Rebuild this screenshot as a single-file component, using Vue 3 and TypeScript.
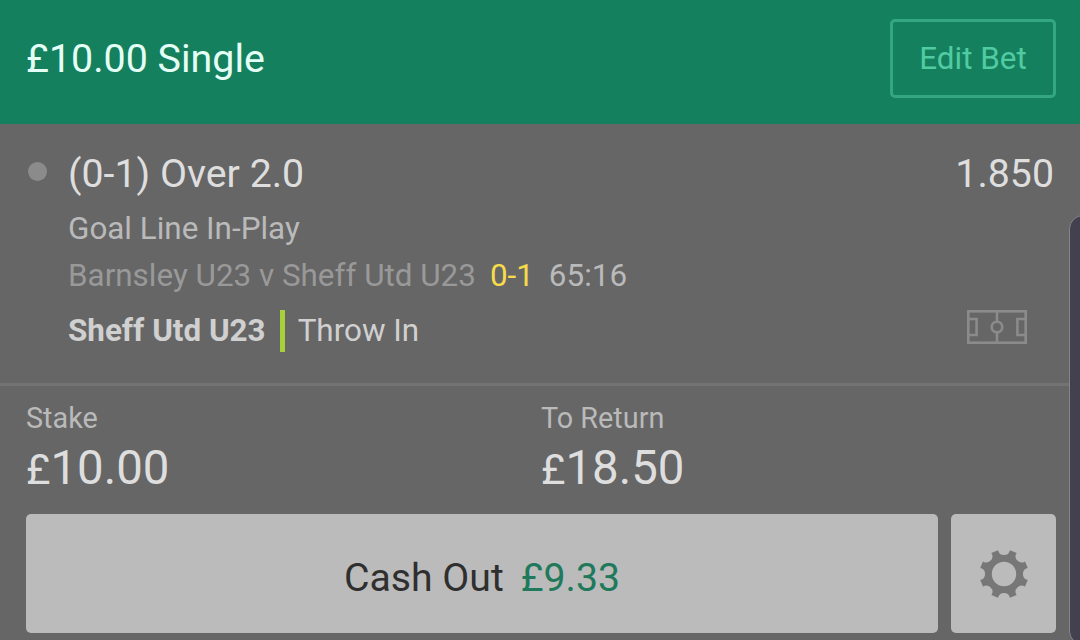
<script setup lang="ts">
const bet = {
  title: '£10.00 Single',
  selection: '(0-1) Over 2.0',
  odds: '1.850',
  market: 'Goal Line In-Play',
  fixture: 'Barnsley U23 v Sheff Utd U23',
  score: '0-1',
  clock: '65:16',
  team: 'Sheff Utd U23',
  event: 'Throw In',
  cashOut: '£9.33',
}

const totals = [
  { label: 'Stake', amount: '10.00' },
  { label: 'To Return', amount: '18.50' },
]

// Eight-toothed gear outline with rounded notches between the teeth
function gearPath(): string {
  const point = (deg: number): string => {
    const a = (deg * Math.PI) / 180
    return `${(24.5 * Math.cos(a)).toFixed(2)} ${(24.5 * Math.sin(a)).toFixed(2)}`
  }
  let d = `M${point(-14)}`
  for (let k = 0; k < 8; k++) {
    d += `A6.05 6.05 0 0 0 ${point(k * 45 + 14)}L${point(k * 45 + 31)}`
  }
  return d + 'ZM12.2 0A12.2 12.2 0 1 0 -12.2 0A12.2 12.2 0 1 0 12.2 0Z'
}
const gear = gearPath()
</script>

<template>
  <main class="slip">
    <header class="header">
      <h1 class="title">{{ bet.title }}</h1>
      <button class="edit">Edit Bet</button>
    </header>

    <section class="selection">
      <span class="dot"></span>
      <div class="details">
        <div class="pick"><span>{{ bet.selection }}</span><span class="odds">{{ bet.odds }}</span></div>
        <div class="line market">{{ bet.market }}</div>
        <div class="line fixture">
          <span class="teams">{{ bet.fixture }}</span>
          <span class="score">{{ bet.score }}</span>
          <span class="clock">{{ bet.clock }}</span>
        </div>
        <div class="live">
          <span class="team">{{ bet.team }}</span>
          <span class="bar"></span>
          <span class="event">{{ bet.event }}</span>
          <svg class="pitch" width="60" height="34" viewBox="0 0 60 34" fill="none" stroke="#8b8b8b" stroke-width="2.6">
            <rect x="1.3" y="1.3" width="57.4" height="31.4" />
            <path d="M30 1V12M30 23V33M2 9H9.6V25H2M58 9H50.4V25H58" />
            <circle cx="30" cy="17" r="5.3" />
          </svg>
        </div>
      </div>
    </section>

    <section class="totals">
      <div v-for="t in totals" :key="t.label" class="total">
        <div class="label">{{ t.label }}</div>
        <div class="amount"><span class="currency">£</span>{{ t.amount }}</div>
      </div>
    </section>

    <footer class="actions">
      <button class="cash"><span>Cash Out</span><span class="value">{{ bet.cashOut }}</span></button>
      <button class="settings" aria-label="Settings">
        <svg width="50" height="50" viewBox="-25 -25 50 50"><path :d="gear" fill="#777" fill-rule="evenodd" /></svg>
      </button>
    </footer>

    <aside class="edge"></aside>
  </main>
</template>

<style>
body { margin: 0; }
</style>

<style scoped>
.slip {
  position: relative;
  width: 1080px;
  height: 640px;
  overflow: hidden;
  background: #666;
  font-family: Roboto, "Liberation Sans", sans-serif;
  white-space: nowrap;
}
.slip *, .slip { box-sizing: border-box; }
button { font: inherit; margin: 0; padding: 0; border: 0; }
.header {
  height: 124px;
  padding: 0 24px 7px 26px;
  display: flex;
  align-items: center;
  justify-content: space-between;
  background: #15805d;
}
.title { margin: 0; font-size: 39.4px; font-weight: 400; color: #e4fff5; }
.edit {
  width: 166px;
  height: 79px;
  border: 3px solid #34a681;
  border-radius: 5px;
  background: transparent;
  color: #50cba2;
  font-size: 31.4px;
}
.selection {
  height: 262px;
  padding: 25px 26px 0 28px;
  display: flex;
  border-bottom: 3px solid #737373;
}
.dot { width: 19px; height: 19px; margin: 13px 21px 0 0; border-radius: 50%; background: #8b8b8b; }
.details { flex: 1; }
.pick {
  height: 56px;
  display: flex;
  justify-content: space-between;
  font-size: 39.3px;
  line-height: 50px;
  color: #dedede;
}
.line { height: 47px; line-height: 47px; font-size: 31.4px; }
.market { color: #bababa; }
.fixture { display: flex; color: #999; }
.score { margin-left: 14px; color: #f6dc4b; }
.clock { margin-left: 15px; color: #bababa; }
.live {
  margin-top: 11px;
  height: 42px;
  display: flex;
  align-items: center;
  font-size: 31.4px;
  line-height: 42px;
  color: #d0d0d0;
}
.team { font-weight: 700; }
.bar { width: 5px; height: 42px; margin: 0 13px 0 14px; background: #a8d03a; }
.pitch { margin: -8px 27px 0 auto; }
.totals { height: 128px; padding: 12px 0 0 26px; display: flex; }
.total { width: 515px; }
.label { height: 40px; line-height: 40px; font-size: 28.8px; color: #bababa; }
.amount { height: 60px; line-height: 60px; font-size: 47.4px; color: #dedede; }
.currency { font-size: 42px; }
.actions { display: flex; gap: 13px; padding: 0 24px 0 26px; }
.cash, .settings {
  height: 119px;
  border-radius: 5px;
  background: #bbb;
  display: flex;
  align-items: center;
  justify-content: center;
}
.cash { width: 912px; padding-top: 9px; gap: 17px; font-size: 39.2px; color: #2f2f2f; }
.value { color: #20795a; }
.settings { width: 105px; }
.edge {
  position: absolute;
  left: 1069px;
  top: 215px;
  width: 40px;
  height: 430px;
  border: 1.5px solid #85858a;
  border-radius: 14px;
  background: #434050;
}
</style>
